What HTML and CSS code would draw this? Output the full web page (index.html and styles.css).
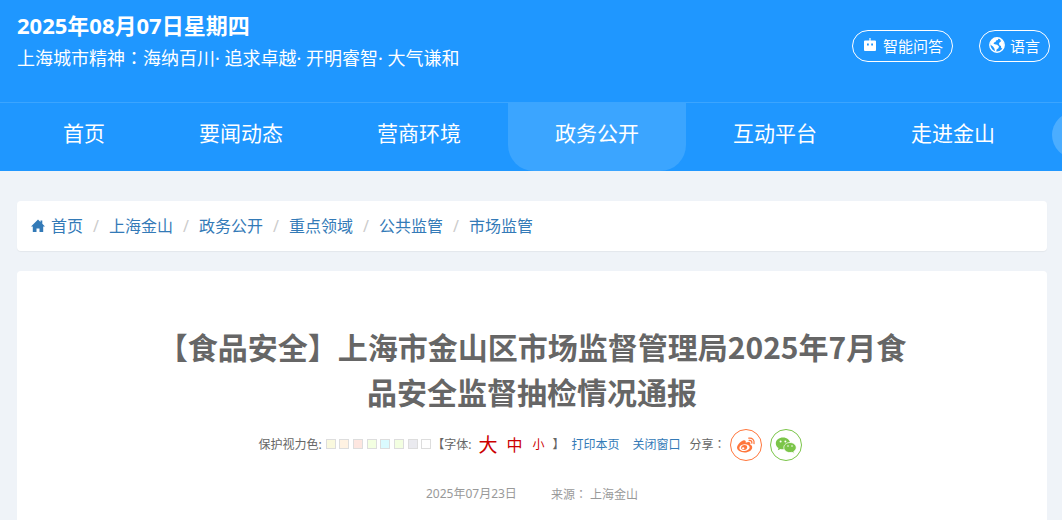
FILE: index.html
```html
<!DOCTYPE html>
<html lang="zh-CN">
<head>
    <meta charset="UTF-8">
    <meta name="viewport" content="width=device-width, initial-scale=1.0">
    <title>【食品安全】上海市金山区市场监督管理局2025年7月食品安全监督抽检情况通报</title>
    <link rel="stylesheet" href="styles.css">
</head>
<body>

    <!-- Header -->
    <header class="header">
        <div class="top">
            <div class="top-info">
                <p class="date">2025年08月07日星期四</p>
                <p class="spirit">上海城市精神<span class="colon" lang="zh-TW">：</span>海纳百川· 追求卓越· 开明睿智· 大气谦和</p>
            </div>
            <div class="top-btns">
                <button type="button" class="top-btn">
                    <svg width="16" height="16" viewBox="0 0 16 16" fill="#fff">
                        <path fill-rule="evenodd" d="M7.4 1h1.2v2.5H13a1 1 0 0 1 1 1V13a1 1 0 0 1-1 1H3a1 1 0 0 1-1-1V4.500a1 1 0 0 1 1-1h4.400zM5 6.500v2h1.800v-2zM9.200 6.500v2H11v-2z"/>
                    </svg>
                    智能问答
                </button>
                <button type="button" class="top-btn">
                    <svg width="16" height="16" viewBox="0 0 16 16">
                        <circle cx="8" cy="8" r="7.200" fill="none" stroke="#fff" stroke-width="1.400"/>
                        <path fill="#fff" d="M1.500 5.500L4 2l4-1.200 1.500.8-.7 1.400L7 3.600 6.600 5 5 5.600l-.4 1.200 1.200.4 2.400.6 1.800 1.600-.6 1.800-1.800 1.400-.4 2.200-1.200-.4-.6-3L4 9.500 1.200 7.500zM11 2.200l2.400 1.600 1.400 3 .2 2.800-1.600 2-1.200-.6-.2-2-1.600-.8-.4-2 1.200-1.400 1-.4z"/>
                    </svg>
                    语言
                </button>
            </div>
        </div>
        <nav class="nav">
            <a href="#">首页</a>
            <a href="#">要闻动态</a>
            <a href="#">营商环境</a>
            <a href="#" class="active">政务公开</a>
            <a href="#">互动平台</a>
            <a href="#">走进金山</a>
            <button type="button" class="nav-more" aria-label="更多"></button>
        </nav>
    </header>

    <main class="container">
        <!-- Breadcrumb -->
        <ol class="breadcrumb">
            <li>
                <a href="#">
                    <svg width="14" height="14" viewBox="0 0 14 14" fill="#337ab7">
                        <path d="M7 .5l2.500 2.500V1.500h1.800v3.300L14 7.500h-1.800V13H8.500V9.500h-3V13H1.800V7.500H0z"/>
                    </svg>
                    首页
                </a>
            </li>
            <li><a href="#">上海金山</a></li>
            <li><a href="#">政务公开</a></li>
            <li><a href="#">重点领域</a></li>
            <li><a href="#">公共监管</a></li>
            <li><a href="#">市场监管</a></li>
        </ol>

        <!-- Article -->
        <article class="article">
            <h1>【食品安全】上海市金山区市场监督管理局2025年7月食品安全监督抽检情况通报</h1>

            <div class="tools">
                <span>保护视力色:</span>
                <div class="colors">
                    <button type="button" class="c1" aria-label="米黄"></button>
                    <button type="button" class="c2" aria-label="浅橙"></button>
                    <button type="button" class="c3" aria-label="浅红"></button>
                    <button type="button" class="c4" aria-label="浅绿"></button>
                    <button type="button" class="c5" aria-label="浅蓝"></button>
                    <button type="button" class="c4" aria-label="青绿"></button>
                    <button type="button" class="c6" aria-label="浅灰"></button>
                    <button type="button" class="c7" aria-label="白色"></button>
                </div>
                <div class="sizes">
                    <span>【字体:</span>
                    <a href="#" class="big">大</a>
                    <a href="#" class="mid">中</a>
                    <a href="#" class="small">小</a>
                    <span>】</span>
                </div>
                <div class="links">
                    <a href="#">打印本页</a>
                    <a href="#">关闭窗口</a>
                </div>
                <span>分享<span class="colon" lang="zh-TW">：</span></span>
                <div class="share">
                    <a href="#" class="weibo" aria-label="微博">
                        <svg width="20" height="20" viewBox="0 0 20 20">
                            <path fill="#ff763b" fill-rule="evenodd" d="M8.200 5.200C6.400 4.800 1 9.200 1 12.600c0 3 3.600 4.800 7.600 4.800 4.400 0 7.600-2.600 7.600-5 0-1.600-1-2.300-2-2.600.5-1.500.2-2.300-.7-2.600-1-.3-2.500 0-3.800.6.400-1.500-.1-2.400-1.500-2.600zM8.200 9.200c2.900-.3 5.200.9 5.400 2.900.2 1.900-1.900 3.700-4.800 3.900-2.800.3-5.200-.9-5.400-2.800-.2-2 1.900-3.700 4.800-4z"/>
                            <path fill="#ff763b" fill-rule="evenodd" d="M8.500 10c-2 .1-3.400 1.300-3.400 2.800 0 1.400 1.200 2.300 2.900 2.200 1.900-.1 3.200-1.400 3.200-2.800S10.200 9.900 8.500 10zM7.200 12.200a1.200 1 0 1 1 0 2 1.200 1 0 1 1 0-2z"/>
                            <path fill="none" stroke="#ff763b" stroke-width="1.300" stroke-linecap="round" d="M12.800 3.200c3.300-.7 6 2 5.200 5.300M13.200 5.500c1.700-.4 3 .9 2.600 2.600"/>
                        </svg>
                    </a>
                    <a href="#" class="wechat" aria-label="微信">
                        <svg width="22" height="20" viewBox="0 0 22 20">
                            <path fill="#7bc549" d="M8 2.500c-4 0-7.200 2.600-7.200 5.900 0 1.900 1 3.500 2.700 4.600l-.7 2.300 2.700-1.400c.8.200 1.600.4 2.500.4 4 0 7.200-2.700 7.200-5.900S12 2.500 8 2.500z"/>
                            <path fill="#7bc549" stroke="#fff" stroke-width=".8" d="M15 7.500c-3.400 0-6.200 2.300-6.200 5.100s2.800 5 6.200 5c.7 0 1.400-.1 2-.3l2.300 1.300-.6-2c1.500-.9 2.500-2.300 2.500-4 0-2.800-2.800-5.100-6.200-5.100z"/>
                            <g fill="#fff">
                                <circle cx="5.600" cy="6.500" r="1"/>
                                <circle cx="10.400" cy="6.500" r="1"/>
                                <circle cx="13" cy="11" r=".8"/>
                                <circle cx="17" cy="11" r=".8"/>
                            </g>
                        </svg>
                    </a>
                </div>
            </div>

            <p class="meta">
                <span>2025年07月23日</span>
                <span>来源<span class="colon" lang="zh-TW">：</span> 上海金山</span>
            </p>
        </article>
    </main>

</body>
</html>
```
FILE: styles.css
```css
/* Base */
* {
    box-sizing: border-box;
}
body {
    margin: 0;
    min-height: 100vh;
    font-family: "Noto Sans", "Noto Sans CJK SC", sans-serif;
    font-size: 12px;
    color: #666;
    background-color: #eff3f8;
    overflow-x: hidden;
}
a {
    color: #337ab7;
    text-decoration: none;
}
a:hover {
    text-decoration: underline;
}
button {
    font-family: inherit;
    cursor: pointer;
}
svg {
    display: block;
    flex: none;
}
.colon {
    font-family: "Noto Sans CJK TC", sans-serif;
}

/* Header */
.header {
    background-color: #1f97ff;
    color: #fff;
}
.top {
    display: flex;
    justify-content: space-between;
    align-items: flex-start;
    min-height: 102px;
    padding: 9px 12px 0 17px;
}
.top p {
    margin: 0;
    line-height: 32px;
}
.top .date {
    font-size: 22px;
    font-weight: bold;
}
.top .spirit {
    font-size: 18px;
}
.top-btns {
    display: flex;
    gap: 26px;
    padding-top: 21px;
}
.top-btn {
    display: flex;
    align-items: center;
    gap: 5px;
    height: 32px;
    padding: 0 9px 2px;
    border: 1px solid #fff;
    border-radius: 16px;
    background: none;
    color: #fff;
    font-size: 15px;
    white-space: nowrap;
}

/* Nav */
.nav {
    display: flex;
    padding-left: 16px;
    border-top: 1px solid #3ba5ff;
    overflow: hidden;
}
.nav a {
    flex: none;
    padding: 0 47px 8px;
    color: #fff;
    font-size: 21px;
    line-height: 60px;
}
.nav a.active {
    background-color: #3ba5ff;
    border-radius: 0 0 26px 26px;
}
.nav-more {
    flex: none;
    width: 46px;
    height: 46px;
    margin: 9px 0 0 10px;
    border: none;
    border-radius: 50%;
    background-color: #4badff;
}

/* Content */
.container {
    padding: 30px 15px 0 17px;
}
.breadcrumb {
    display: flex;
    margin: 0 0 20px;
    padding: 0 14px;
    list-style: none;
    background-color: #fff;
    border-radius: 4px;
    box-shadow: 0 1px 1px rgba(0, 0, 0, 0.05);
    font-size: 16px;
    line-height: 50px;
}
.breadcrumb li {
    display: flex;
}
.breadcrumb li + li::before {
    content: "/";
    width: 26px;
    text-align: center;
    color: #ccc;
}
.breadcrumb a {
    display: flex;
    align-items: center;
    gap: 6px;
}
.article {
    padding: 53px 20px 40px;
    background-color: #fff;
    border-radius: 4px;
}
.article h1 {
    max-width: 770px;
    margin: 0 auto;
    font-family: "Noto Sans CJK SC", sans-serif;
    font-size: 30px;
    line-height: 45px;
    text-align: center;
}

/* Toolbar */
.tools {
    display: flex;
    justify-content: center;
    align-items: center;
    margin-top: 14px;
    padding-right: 4px;
    line-height: 32px;
}
.colors {
    margin: 0 1px 0 4px;
    padding-bottom: 4px;
    font-size: 14px;
    line-height: 28px;
}
.colors button {
    width: 10px;
    height: 10px;
    padding: 0;
    border: 1px solid #ddd;
}
.c1 { background-color: #faf9de; }
.c2 { background-color: #fff2e2; }
.c3 { background-color: #fde6e0; }
.c4 { background-color: #f3ffe1; }
.c5 { background-color: #dafafe; }
.c6 { background-color: #eaeaef; }
.c7 { background-color: #fff; }
.sizes {
    display: flex;
    align-items: center;
}
.sizes a {
    color: #c00;
}
.sizes .big {
    font-size: 19px;
    margin: 0 9px 0 7px;
}
.sizes .mid {
    font-size: 16px;
}
.sizes .small {
    font-size: 12px;
    margin: 0 8px 0 10px;
}
.links {
    display: flex;
    gap: 13px;
    margin: 0 9px 0 7px;
}
.share {
    display: flex;
    gap: 8px;
    margin-left: 4px;
}
.share a {
    display: flex;
    align-items: center;
    justify-content: center;
    width: 32px;
    height: 32px;
    border: 1px solid #ff763b;
    border-radius: 50%;
}
.share .wechat {
    border-color: #7bc549;
}
.meta {
    display: flex;
    justify-content: center;
    gap: 34px;
    margin: 23px 0 0;
    line-height: 20px;
    color: #999;
}
```
